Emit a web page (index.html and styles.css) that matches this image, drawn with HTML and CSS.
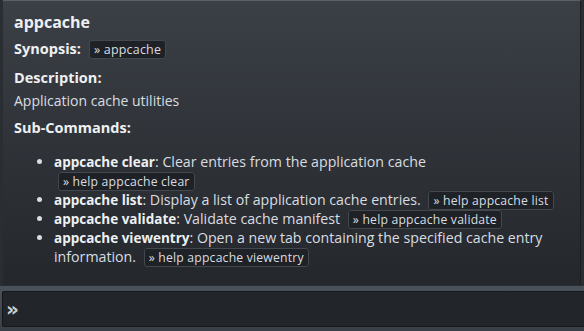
FILE: index.html
```html
<!DOCTYPE html>
<html lang="en">

<head>
    <meta charset="UTF-8">
    <title>appcache - help</title>
    <link rel="stylesheet" href="styles.css">
</head>

<body>
    <div class="tooltip">
        <div class="panel">
            <h1 class="cmd-name">appcache</h1>

            <div class="section synopsis">
                <span class="label">Synopsis:</span>
                <span class="chip">&raquo; appcache</span>
            </div>

            <div class="section">
                <div class="label">Description:</div>
                <p class="desc">Application cache utilities</p>
            </div>

            <div class="section subs">
                <div class="label">Sub-Commands:</div>
                <ul class="subcommands">
                    <li><strong>appcache clear</strong>: Clear entries from the application cache <span class="chip">&raquo; help appcache clear</span></li>
                    <li><strong>appcache list</strong>: Display a list of application cache entries. <span class="chip">&raquo; help appcache list</span></li>
                    <li><strong>appcache validate</strong>: Validate cache manifest <span class="chip">&raquo; help appcache validate</span></li>
                    <li><strong>appcache viewentry</strong>: Open a new tab containing the specified cache entry information. <span class="chip">&raquo; help appcache viewentry</span></li>
                </ul>
            </div>
        </div>
    </div>

    <!-- command line -->
    <div class="cmdbar">
        <div class="cmd-input">
            <span class="prompt">&raquo;</span>
        </div>
    </div>
</body>

</html>
```

FILE: styles.css
```css
body {
    margin: 0;
    padding: 0;
    width: 584px;
    height: 331px;
    overflow: hidden;
    background-color: #ececec;
    font-family: 'Open Sans', 'DejaVu Sans', sans-serif;
    color: #d9dde1;
}

.tooltip {
    height: 286px;
    padding: 0 3px 0 3px;
    box-sizing: border-box;
    background-color: #2a2e33;
}

.panel {
    height: 285px;
    box-sizing: border-box;
    padding: 9px 11px 0 11px;
    border-top: 1px solid #5a6068;
    border-right: 1px solid #1b1d20;
    background: linear-gradient(to bottom, #3b4046, #24272c);
}

.cmd-name {
    margin: 0;
    font-size: 16px;
    font-weight: bold;
    line-height: 24px;
    color: #eef0f2;
}

.section {
    margin-top: 7px;
    font-size: 14px;
}

.subs {
    margin-top: 6px;
}

.label {
    font-weight: bold;
    font-size: 14.5px;
    color: #eef0f2;
    line-height: 22px;
}

.synopsis {
    display: flex;
    align-items: center;
    gap: 8px;
    margin-top: 4px;
}

.desc {
    margin: 2px 0 0 0;
    line-height: 20px;
}

.chip {
    display: inline-block;
    padding: 0 4px;
    font-size: 12.5px;
    line-height: 17px;
    letter-spacing: 0.2px;
    white-space: nowrap;
    background-color: #1e2125;
    border: 1px solid #43484e;
    border-radius: 3px;
    color: #d9dde1;
}

.subcommands {
    margin: 13px 0 0 0;
    padding-left: 40px;
    line-height: 19px;
    font-size: 14.2px;
}

.subcommands li {
    line-height: 19px;
}

.subcommands strong {
    font-size: 13.5px;
    line-height: 12px;
    color: #eef0f2;
}

.subcommands .chip {
    display: inline;
    margin-left: 4px;
    padding: 0 4px;
    font-size: 12.2px;
    line-height: 12px;
}

.cmdbar {
    height: 45px;
    padding: 5px 0 4px 2px;
    box-sizing: border-box;
    background: linear-gradient(to bottom, #4a5159, #3a4047);
}

.cmd-input {
    height: 100%;
    box-sizing: border-box;
    display: flex;
    align-items: center;
    padding-left: 3px;
    background-color: #22252a;
    border: 1px solid #15171a;
    border-right: none;
    border-radius: 2px 0 0 2px;
}

.prompt {
    font-family: 'DejaVu Sans', sans-serif;
    font-weight: bold;
    font-size: 20px;
    color: #c9ced3;
}
```
